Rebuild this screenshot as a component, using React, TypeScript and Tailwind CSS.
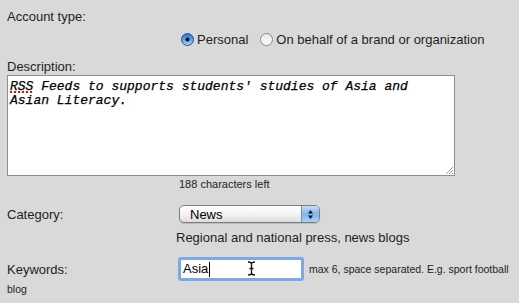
import React from "react";

function Radio({ checked }: { checked: boolean }) {
  return checked ? (
    <svg width="13" height="13" viewBox="0 0 13 13" className="inline-block">
      <defs>
        <linearGradient id="rb" x1="0" y1="0" x2="0" y2="1">
          <stop offset="0" stopColor="#2f6fd1" />
          <stop offset="0.5" stopColor="#5ea0ec" />
          <stop offset="1" stopColor="#a9d3fb" />
        </linearGradient>
      </defs>
      <circle cx="6.5" cy="6.5" r="6" fill="url(#rb)" stroke="#2a4f86" strokeWidth="1" />
      <circle cx="6.5" cy="6.5" r="2" fill="#111" />
    </svg>
  ) : (
    <svg width="13" height="13" viewBox="0 0 13 13" className="inline-block">
      <defs>
        <linearGradient id="rw" x1="0" y1="0" x2="0" y2="1">
          <stop offset="0" stopColor="#e6e6e6" />
          <stop offset="1" stopColor="#ffffff" />
        </linearGradient>
      </defs>
      <circle cx="6.5" cy="6.5" r="6" fill="url(#rw)" stroke="#8a8a8a" strokeWidth="1" />
    </svg>
  );
}

export default function App() {
  return (
    <div
      className="w-[519px] h-[303px] overflow-hidden bg-[#d9d9d9] text-[#1e1e1e] text-[13px] leading-[15px] px-[7px]"
      style={{ fontFamily: '"Liberation Sans", Arial, sans-serif' }}
    >
      <div className="pt-[9px] h-[24px]">Account type:</div>
      <div className="mt-[8px] pl-[174px] flex items-center h-[15px]">
        <Radio checked />
        <span className="ml-[3px]">Personal</span>
        <span className="ml-[12px] flex items-center">
          <Radio checked={false} />
          <span className="ml-[3px]">On behalf of a brand or organization</span>
        </span>
      </div>
      <div className="mt-[12px] h-[15px]">Description:</div>
      <div className="mt-[1px] relative w-[448px] h-[101px] bg-white border border-[#8e8e8e] pl-[2px] pt-[4px]">
        <div
          className="italic text-[13px] leading-[14px] text-black [-webkit-text-stroke:0.25px_black]"
          style={{ fontFamily: '"Liberation Mono", "Courier New", monospace' }}
        >
          <span className="underline decoration-dotted decoration-[#e01010] decoration-2 underline-offset-[1px]">RSS</span>{" "}
          Feeds to supports students' studies of Asia and
          <br />
          Asian Literacy.
        </div>
        <svg width="10" height="10" viewBox="0 0 10 10" className="absolute right-0 bottom-0">
          <path d="M9 2 L2 9 M9 5 L5 9 M9 8 L8 9" stroke="#9a9a9a" strokeWidth="1" />
        </svg>
      </div>
      <div className="mt-[2px] pl-[172px] text-[11px] leading-[13px] h-[13px]">188 characters left</div>
      <div className="mt-[14px] flex items-center h-[18px]">
        <span className="w-[172px]">Category:</span>
        <div className="relative w-[141px] h-[18px] rounded-[5px] border border-[#7d7d7d] bg-gradient-to-b from-white via-[#f4f4f4] to-[#dcdcdc] flex items-center overflow-hidden shadow-[0_1px_1px_rgba(0,0,0,0.15)]">
          <span className="pl-[10px] flex-1 text-[13px] text-black">News</span>
          <div className="w-[18px] h-full border-l border-[#6b8fc9] bg-gradient-to-b from-[#c6defa] via-[#7fb3f0] to-[#a9d1fb] flex items-center justify-center">
            <svg width="7" height="11" viewBox="0 0 7 11">
              <path d="M3.5 1 L6 4.5 L1 4.5 Z" fill="#111" />
              <path d="M3.5 10 L6 6.5 L1 6.5 Z" fill="#111" />
            </svg>
          </div>
        </div>
      </div>
      <div className="mt-[7px] pl-[169px] h-[15px]">Regional and national press, news blogs</div>
      <div className="mt-[12px] leading-[14px]">
        <span className="inline-block w-[171px] align-middle leading-[15px]">Keywords:</span>
        <span className="inline-block align-middle relative w-[126px] h-[24px] rounded-[3px] border-[3px] border-[#7ca9e6] bg-white">
          <span className="absolute left-[2px] top-[1px] leading-[16px] text-[13px] text-black flex items-center">
            Asia<span className="inline-block w-[1px] h-[15px] bg-black ml-[1px]" />
          </span>
          <svg width="9" height="15" viewBox="0 0 9 15" className="absolute left-[66px] top-[1px]">
            <path d="M1 1 Q4.5 1 4.5 3 Q4.5 1 8 1 M4.5 3 L4.5 12 M1 14 Q4.5 14 4.5 12 Q4.5 14 8 14 M2.5 7.5 L6.5 7.5" stroke="#111" strokeWidth="1.3" fill="none" />
          </svg>
        </span>
        <span className="text-[10.5px] leading-[14px] ml-[5px] align-middle">
          max 6, space separated. E.g. sport football blog
        </span>
      </div>
    </div>
  );
}
